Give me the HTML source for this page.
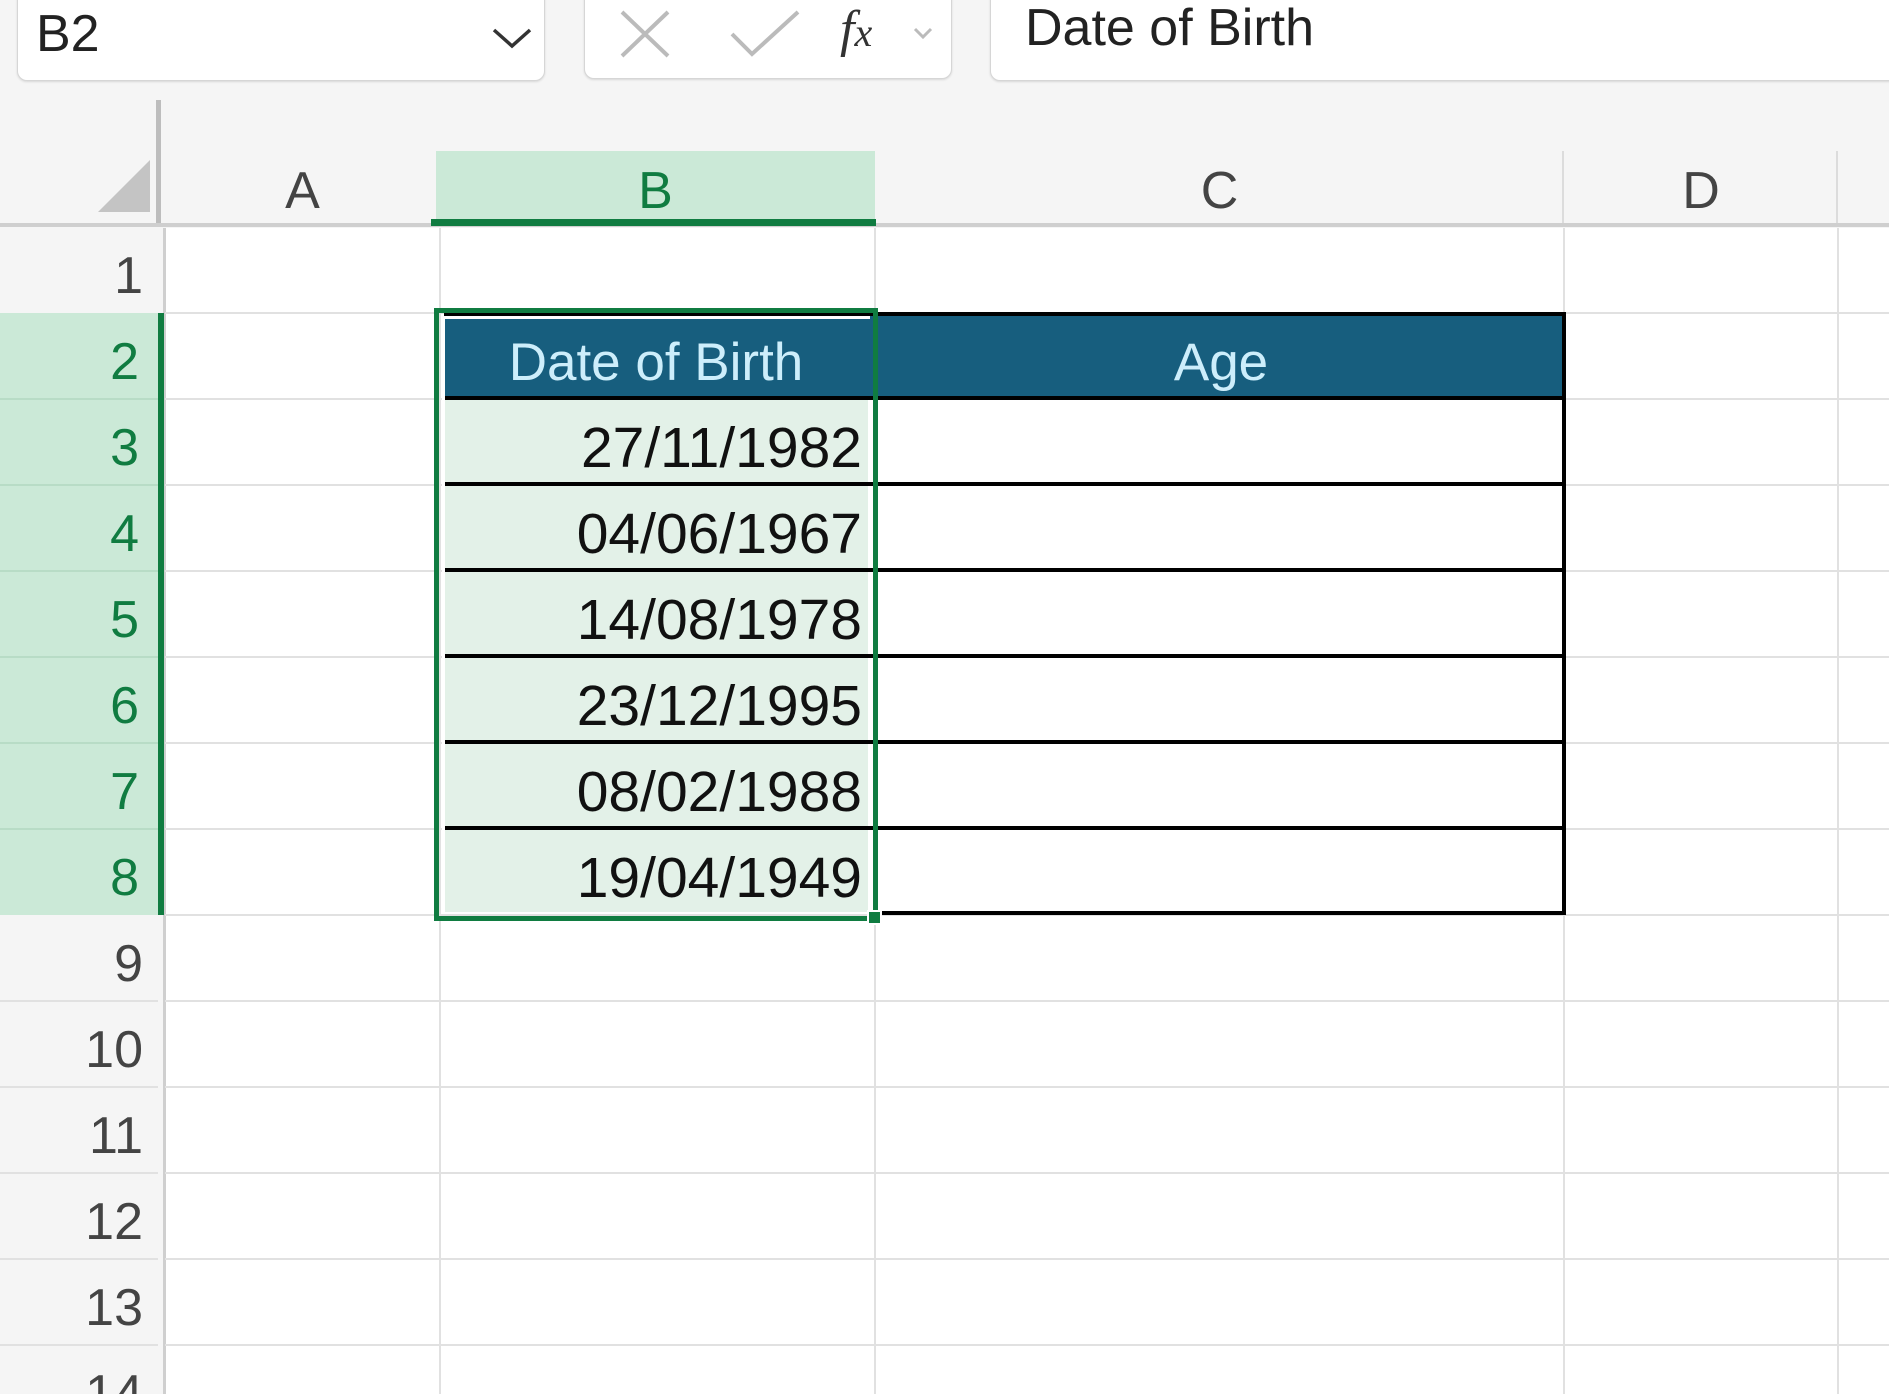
<!DOCTYPE html>
<html style="overflow:hidden;width:1889px;height:1394px"><head><meta charset="utf-8"><style>
*{margin:0;padding:0;box-sizing:border-box}
body{width:1889px;height:1394px;overflow:hidden;background:#f5f5f5;font-family:"Liberation Sans",sans-serif;position:relative}
.a{position:absolute}
.box{background:#fff;border:1px solid #d6d6d6;border-radius:10px;box-shadow:0 1px 2px rgba(0,0,0,.12)}
.ch{position:absolute;top:151px;height:75px;font-size:52px;color:#444;text-align:center;line-height:80px}
.rh{position:absolute;left:0;width:163px;height:86px;font-size:52px;color:#444;text-align:right;padding-right:20px;line-height:100px;overflow:hidden}
.hl{position:absolute;left:165px;right:0;height:2px;background:#e1e1e1}
.vl{position:absolute;top:228px;bottom:0;width:2px;background:#e1e1e1}
.num{position:absolute;left:444px;width:418px;text-align:right;font-size:57px;color:#111;line-height:88px}
.bl{position:absolute;left:444px;width:1122px;height:4px;background:#000}
</style></head><body>
<div class="a box" style="left:17px;top:-12px;width:528px;height:93px"></div>
<div class="a" style="left:36px;top:4px;font-size:52px;color:#222">B2</div>
<svg class="a" style="left:490px;top:24px" width="44" height="28"><path d="M4 6 L22 22 L40 6" fill="none" stroke="#333" stroke-width="3.5"/></svg>
<div class="a box" style="left:584px;top:-12px;width:368px;height:91px"></div>
<svg class="a" style="left:618px;top:8px" width="56" height="52"><path d="M4 4 L50 48 M50 4 L4 48" stroke="#bbb" stroke-width="4"/></svg>
<svg class="a" style="left:728px;top:8px" width="74" height="52"><path d="M4 26 L24 46 L70 4" fill="none" stroke="#bbb" stroke-width="4"/></svg>
<div class="a" style="left:840px;top:0px;font-size:52px;font-style:italic;font-family:'Liberation Serif',serif;color:#333">f<span style="font-size:40px">x</span></div>
<svg class="a" style="left:912px;top:26px" width="22" height="16"><path d="M3 3 L11 11 L19 3" fill="none" stroke="#bbb" stroke-width="3"/></svg>
<div class="a box" style="left:990px;top:-12px;width:960px;height:93px"></div>
<div class="a" style="left:1025px;top:-2px;font-size:52px;color:#222">Date of Birth</div>

<div class="a" style="left:156px;top:100px;width:5px;height:126px;background:#bdbdbd"></div>
<svg class="a" style="left:98px;top:160px" width="52" height="52"><path d="M52 0 L52 52 L0 52Z" fill="#c4c4c4"/></svg>
<div class="a" style="left:165px;top:228px;right:0;bottom:0;background:#fff"></div>
<div class="a" style="left:0;top:223px;right:0;height:4px;background:#cfcfcf"></div>
<div class="a" style="left:163px;top:228px;width:3px;bottom:0;background:#cfcfcf"></div>
<div class="ch" style="left:165px;width:275px">A</div>
<div class="a" style="left:436px;top:151px;width:439px;height:72px;background:#cbe9d7"></div>
<div class="a" style="left:431px;top:219px;width:445px;height:7px;background:#107c41"></div>
<div class="ch" style="left:436px;width:439px;color:#107c41">B</div>
<div class="ch" style="left:875px;width:689px">C</div>
<div class="ch" style="left:1564px;width:274px">D</div>
<div class="a" style="left:1562px;top:151px;width:2px;height:72px;background:#dcdcdc"></div>
<div class="a" style="left:1836px;top:151px;width:2px;height:72px;background:#dcdcdc"></div>
<div class="a" style="left:0;top:313px;width:158px;height:602px;background:#cbe9d7"></div>
<div class="a" style="left:158px;top:313px;width:6px;height:602px;background:#107c41"></div>
<div class="hl" style="top:312px"></div><div class="hl" style="top:398px"></div><div class="hl" style="top:484px"></div><div class="hl" style="top:570px"></div><div class="hl" style="top:656px"></div><div class="hl" style="top:742px"></div><div class="hl" style="top:828px"></div><div class="hl" style="top:914px"></div><div class="hl" style="top:1000px"></div><div class="hl" style="top:1086px"></div><div class="hl" style="top:1172px"></div><div class="hl" style="top:1258px"></div><div class="hl" style="top:1344px"></div>
<div class="a" style="left:0;width:158px;top:398px;height:2px;background:#b8dcc6"></div><div class="a" style="left:0;width:158px;top:484px;height:2px;background:#b8dcc6"></div><div class="a" style="left:0;width:158px;top:570px;height:2px;background:#b8dcc6"></div><div class="a" style="left:0;width:158px;top:656px;height:2px;background:#b8dcc6"></div><div class="a" style="left:0;width:158px;top:742px;height:2px;background:#b8dcc6"></div><div class="a" style="left:0;width:158px;top:828px;height:2px;background:#b8dcc6"></div>
<div class="a" style="left:0;width:158px;top:1000px;height:2px;background:#e1e1e1"></div><div class="a" style="left:0;width:158px;top:1086px;height:2px;background:#e1e1e1"></div><div class="a" style="left:0;width:158px;top:1172px;height:2px;background:#e1e1e1"></div><div class="a" style="left:0;width:158px;top:1258px;height:2px;background:#e1e1e1"></div><div class="a" style="left:0;width:158px;top:1344px;height:2px;background:#e1e1e1"></div>
<div class="vl" style="left:439px"></div><div class="vl" style="left:874px"></div><div class="vl" style="left:1563px"></div><div class="vl" style="left:1837px"></div>
<div class="rh" style="top:226px">1</div>
<div class="rh" style="top:312px;color:#107c41;padding-right:24px">2</div>
<div class="rh" style="top:398px;color:#107c41;padding-right:24px">3</div>
<div class="rh" style="top:484px;color:#107c41;padding-right:24px">4</div>
<div class="rh" style="top:570px;color:#107c41;padding-right:24px">5</div>
<div class="rh" style="top:656px;color:#107c41;padding-right:24px">6</div>
<div class="rh" style="top:742px;color:#107c41;padding-right:24px">7</div>
<div class="rh" style="top:828px;color:#107c41;padding-right:24px">8</div>
<div class="rh" style="top:914px">9</div>
<div class="rh" style="top:1000px">10</div>
<div class="rh" style="top:1086px">11</div>
<div class="rh" style="top:1172px">12</div>
<div class="rh" style="top:1258px">13</div>
<div class="rh" style="top:1344px;height:50px">14</div>
<div class="a" style="left:444px;top:312px;width:1122px;height:88px;background:#175e7e"></div>
<div class="a" style="left:444px;top:400px;width:424px;height:512px;background:#e3f1e8"></div>
<div class="a" style="left:444px;top:312px;width:1122px;height:4px;background:#000"></div>
<div class="bl" style="top:396px"></div><div class="bl" style="top:482px"></div><div class="bl" style="top:568px"></div><div class="bl" style="top:654px"></div><div class="bl" style="top:740px"></div><div class="bl" style="top:826px"></div><div class="bl" style="left:880px;width:686px;top:911px"></div>
<div class="a" style="left:1562px;top:312px;width:4px;height:603px;background:#000"></div>
<div class="a" style="left:444px;top:316px;width:424px;line-height:94px;text-align:center;font-size:53px;color:#cdeefb">Date of Birth</div>
<div class="a" style="left:878px;top:316px;width:686px;line-height:94px;text-align:center;font-size:53px;color:#cdeefb">Age</div>
<div class="num" style="top:404px">27/11/1982</div>
<div class="num" style="top:490px">04/06/1967</div>
<div class="num" style="top:576px">14/08/1978</div>
<div class="num" style="top:662px">23/12/1995</div>
<div class="num" style="top:748px">08/02/1988</div>
<div class="num" style="top:834px">19/04/1949</div>
<div class="a" style="left:434px;top:308px;width:444px;height:613px;border:5px solid #107c41"></div>
<div class="a" style="left:442px;top:316px;width:428px;height:597px;border:3px solid #fff;border-right:none;border-bottom:none"></div>
<div class="a" style="left:867px;top:910px;width:15px;height:15px;background:#107c41;border:2px solid #fff"></div>
</body></html>
